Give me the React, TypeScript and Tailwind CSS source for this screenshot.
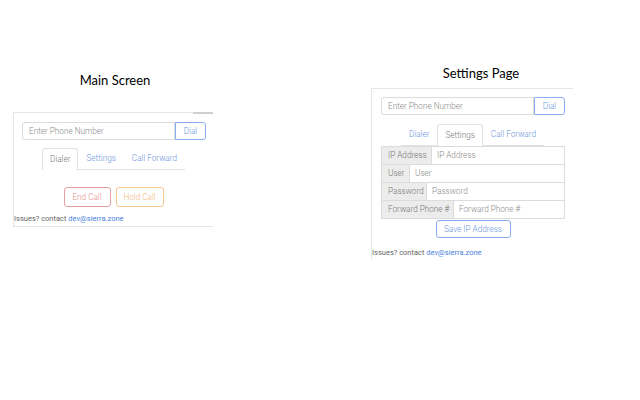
export default function App() {
  return (
    <div className="w-[640px] h-[400px] bg-white flex items-start font-['Roboto',sans-serif] font-light text-[8.2px] text-[#777]">
      <MainScreen />
      <SettingsPage />
    </div>
  )
}

function PhoneRow() {
  return (
    <div className="flex h-[18px]">
      <div className="flex-1 border border-[#dcdcdc] rounded-l-[3px] flex items-center px-[6px] text-[#8a8a8a]">
        Enter Phone Number
      </div>
      <button className="w-[31px] border border-[#8aaeee] rounded-r-[3px] text-[#6b95e2] flex items-center justify-center">
        Dial
      </button>
    </div>
  )
}

function Tabs({ active }: { active: string }) {
  const tabs = ['Dialer', 'Settings', 'Call Forward']
  return (
    <div className="flex justify-center">
      <div className="flex border-b border-[#e2e2e2] h-[22px]">
        {tabs.map(t => (
          <div
            key={t}
            className={
              t === active
                ? 'px-[7px] flex items-center border border-b-0 border-[#e2e2e2] rounded-t-[3px] bg-white -mb-px text-[#777]'
                : 'px-[7px] flex items-center border border-transparent text-[#6b95e2]'
            }
          >
            {t}
          </div>
        ))}
      </div>
    </div>
  )
}

function Issues() {
  return (
    <p className="text-[7.5px] font-normal text-[#666] leading-[10px]">
      Issues? contact <span className="text-[#4a7fe0]">dev@sierra.zone</span>
    </p>
  )
}

function MainScreen() {
  return (
    <div className="ml-[13px] w-[200px] mt-[72px]">
      <h2 className="text-center font-['Lato',sans-serif] font-normal text-[13px] leading-[16px] text-black pl-[4px]">Main Screen</h2>
      <div className="relative mt-[24px] border-t border-l border-b border-[#e6e6e6]">
        <div className="absolute right-0 -top-px w-[20px] h-[2px] bg-[#cfcfcf]" />
        <div className="pl-[8px] pr-[7px] pt-[9px]">
          <PhoneRow />
        </div>
        <div className="mt-[8px]">
          <Tabs active="Dialer" />
        </div>
        <div className="flex justify-center gap-[5px] mt-[17px]">
          <button className="w-[47px] h-[20px] border border-[#e6a0a0] rounded-[3px] text-[#e89090]">End Call</button>
          <button className="w-[48px] h-[20px] border border-[#f6c896] rounded-[3px] text-[#f3b77a]">Hold Call</button>
        </div>
        <div className="mt-[7px] pb-[2px]">
          <Issues />
        </div>
      </div>
    </div>
  )
}

function Field({ label, w }: { label: string; w: string }) {
  return (
    <div className="flex h-[19px] -mt-px first:mt-0">
      <div className={`${w} bg-[#ececec] border border-[#dcdcdc] flex items-center pl-[6px] text-[#777] whitespace-nowrap`}>{label}</div>
      <div className="flex-1 border border-l-0 border-[#dcdcdc] flex items-center pl-[5px] text-[#8a8a8a] whitespace-nowrap">{label}</div>
    </div>
  )
}

function SettingsPage() {
  return (
    <div className="ml-[158px] w-[202px] mt-[65px]">
      <h2 className="text-center font-['Lato',sans-serif] font-normal text-[13px] leading-[16px] text-black pl-[18px]">Settings Page</h2>
      <div className="mt-[7px] border-t border-l border-[#e6e6e6] h-[171px]">
        <div className="pl-[9px] pr-[8px] pt-[8px]">
          <PhoneRow />
        </div>
        <div className="mt-[9px]">
          <Tabs active="Settings" />
        </div>
        <div className="pl-[9px] pr-[8px]">
          <div className="flex flex-col">
            <Field label="IP Address" w="w-[51px]" />
            <Field label="User" w="w-[29px]" />
            <Field label="Password" w="w-[46px]" />
            <Field label="Forward Phone #" w="w-[73px]" />
          </div>
          <div className="flex justify-center">
            <button className="w-[75px] h-[18px] border border-[#8aaeee] rounded-[3px] text-[#6b95e2] mt-px whitespace-nowrap">Save IP Address</button>
          </div>
        </div>
        <div className="mt-[10px]">
          <Issues />
        </div>
      </div>
    </div>
  )
}
